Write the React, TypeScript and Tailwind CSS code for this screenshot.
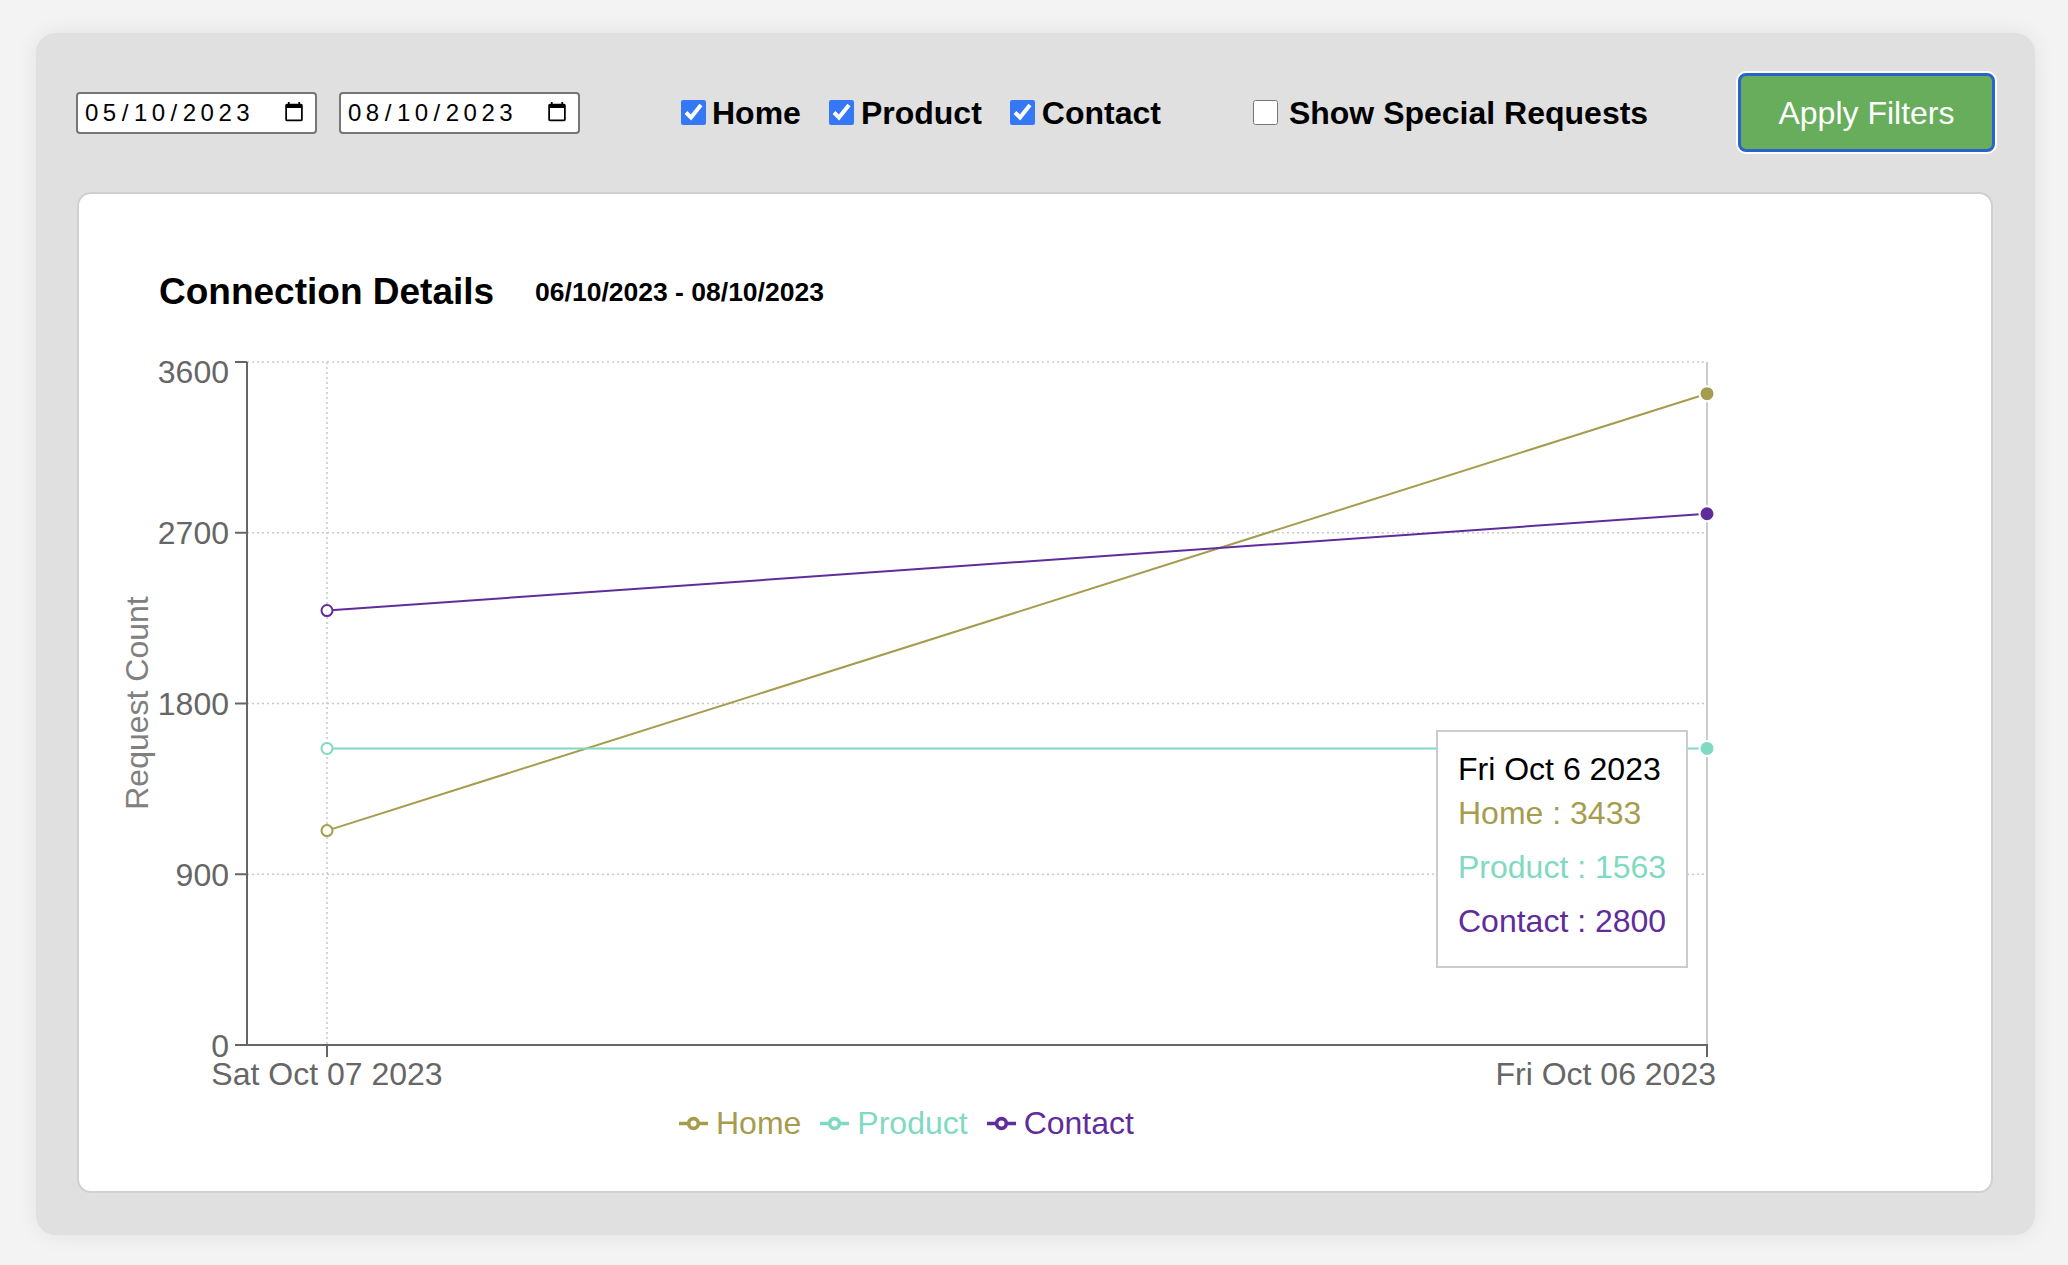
import React from 'react';

const series = [
  { name: 'Home', color: '#a69c4e', first: 1130, last: 3433 },
  { name: 'Product', color: '#80d9c1', first: 1563, last: 1563 },
  { name: 'Contact', color: '#5f2d9b', first: 2290, last: 2800 },
];

// chart coordinates are written in page pixels, shifted back by the svg origin
const X0 = 327;
const X1 = 1707;
const yOf = (v: number) => 1045 - (v / 3600) * 683;

function FilterCheck({ label, checked, gap }: { label: string; checked: boolean; gap: string }) {
  return (
    <label className="flex items-center">
      <input
        type="checkbox"
        defaultChecked={checked}
        className="m-0 w-[25px] h-[25px] accent-[#3478f6]"
      />
      <span className={`${gap} text-[32px] font-bold text-black`}>{label}</span>
    </label>
  );
}

function DateBox({ value, className }: { value: string; className?: string }) {
  return (
    <input
      type="date"
      defaultValue={value}
      className={`${className ?? ''} w-[241px] h-[42px] border-2 border-[#767676] rounded-[4px] bg-white pl-[6px] pr-[8px] text-[24px] tracking-[4.5px] text-black [&::-webkit-calendar-picker-indicator]:w-[22px] [&::-webkit-calendar-picker-indicator]:h-[24px] [&::-webkit-calendar-picker-indicator]:m-0`}
    />
  );
}

function LegendIcon({ color }: { color: string }) {
  return (
    <svg width={29} height={29} viewBox="0 0 32 32">
      <path
        d="M0,16h10.667A5.333,5.333,0,1,1,21.333,16H32M21.333,16A5.333,5.333,0,1,1,10.667,16"
        fill="none"
        stroke={color}
        strokeWidth={4}
      />
    </svg>
  );
}

function Chart() {
  const ticks = [3600, 2700, 1800, 900, 0];
  return (
    <svg width={1912} height={784} className="block">
      <g transform="translate(-79,-311)" fontFamily="'Liberation Sans', Arial, sans-serif">
        {/* grid */}
        {[3600, 2700, 1800, 900].map((v) => (
          <line key={v} x1={247} x2={X1} y1={yOf(v)} y2={yOf(v)} stroke="#c8c8c8" strokeWidth={1.5} strokeDasharray="2 3" />
        ))}
        <line x1={X0} x2={X0} y1={362} y2={1045} stroke="#c8c8c8" strokeWidth={1.5} strokeDasharray="2 3" />

        {/* tooltip cursor */}
        <line x1={X1} x2={X1} y1={362} y2={1045} stroke="#cccccc" strokeWidth={2} />

        {/* y axis */}
        <line x1={247} x2={247} y1={362} y2={1046} stroke="#666" strokeWidth={2} />
        {ticks.map((v) => (
          <g key={v}>
            <line x1={235} x2={247} y1={yOf(v)} y2={yOf(v)} stroke="#666" strokeWidth={2} />
            <text x={229} y={v === 3600 ? 383 : yOf(v) + 11.5} textAnchor="end" fontSize={32} fill="#666">
              {v}
            </text>
          </g>
        ))}
        <text
          x={137}
          y={703}
          transform="rotate(-90 137 703)"
          textAnchor="middle"
          dominantBaseline="central"
          fontSize={32}
          fill="#808080"
        >
          Request Count
        </text>

        {/* x axis */}
        <line x1={246} x2={X1 + 1} y1={1045} y2={1045} stroke="#666" strokeWidth={2} />
        <line x1={X0} x2={X0} y1={1045} y2={1057} stroke="#666" strokeWidth={2} />
        <line x1={X1} x2={X1} y1={1045} y2={1057} stroke="#666" strokeWidth={2} />
        <text x={X0} y={1085} textAnchor="middle" fontSize={32} fill="#666">
          Sat Oct 07 2023
        </text>
        <text x={1716} y={1085} textAnchor="end" fontSize={32} fill="#666">
          Fri Oct 06 2023
        </text>

        {/* lines */}
        {series.map((s) => (
          <line key={s.name} x1={X0} y1={yOf(s.first)} x2={X1} y2={yOf(s.last)} stroke={s.color} strokeWidth={2} />
        ))}
        {series.map((s) => (
          <g key={s.name + '-dots'}>
            <circle cx={X0} cy={yOf(s.first)} r={5.5} fill="#fff" stroke={s.color} strokeWidth={2} />
            <circle cx={X1} cy={yOf(s.last)} r={7.5} fill={s.color} stroke="#fff" strokeWidth={2} />
          </g>
        ))}
      </g>
    </svg>
  );
}

export default function App() {
  return (
    <div className="min-h-[1265px] bg-[#f3f3f3] pt-[33px] pl-[36px] font-['Liberation_Sans',Arial,sans-serif]">
      <div className="w-[1999px] h-[1202px] rounded-[20px] bg-[#e1e0e1] shadow-[0_0_22px_rgba(0,0,0,0.07)] pt-[40px] px-[40px]">
        {/* filters */}
        <div className="flex items-center h-[79px]">
          <DateBox value="2023-05-10" />
          <DateBox value="2023-08-10" className="ml-[22px]" />
          <div className="ml-[101px] flex items-center">
            <FilterCheck label="Home" checked gap="ml-[6px]" />
          </div>
          <div className="ml-[28px] flex items-center">
            <FilterCheck label="Product" checked gap="ml-[7px]" />
          </div>
          <div className="ml-[28px] flex items-center">
            <FilterCheck label="Contact" checked gap="ml-[7px]" />
          </div>
          <div className="ml-[92px] flex items-center">
            <FilterCheck label="Show Special Requests" checked={false} gap="ml-[11px]" />
          </div>
          <button className="ml-auto w-[257px] h-[79px] rounded-[8px] border-[3px] border-[#2c62cc] bg-[#67ad5b] ring-2 ring-white text-[32px] text-white">
            Apply Filters
          </button>
        </div>

        {/* chart card */}
        <div className="mt-[40px] ml-[1px] w-[1916px] h-[1001px] rounded-[14px] border-2 border-[#d0d0d0] bg-white">
          <div className="flex items-baseline h-[42px] mt-[75px] pl-[80px]">
            <h2 className="text-[37px] leading-[46px] font-bold text-black">Connection Details</h2>
            <span className="ml-[41px] -translate-y-[3px] text-[26.5px] font-bold text-black">06/10/2023 - 08/10/2023</span>
          </div>

          <div className="relative">
            <Chart />
            <div className="absolute left-[1357px] top-[419px] border-2 border-[#cccccc] bg-white px-[20px] pt-[19px] pb-[27px] text-[32px] leading-[36px] whitespace-nowrap">
              <div className="text-black">Fri Oct 6 2023</div>
              <div className="mt-[8px] text-[#a69c4e]">Home : 3433</div>
              <div className="mt-[18px] text-[#80d9c1]">Product : 1563</div>
              <div className="mt-[18px] text-[#5f2d9b]">Contact : 2800</div>
            </div>
          </div>

          {/* legend */}
          <div className="mt-[10px] pl-[600px] flex items-center h-[36px] text-[32px] leading-[36px]">
            {series.map((s, i) => (
              <div key={s.name} className={`flex items-center ${i > 0 ? 'ml-[19px]' : ''}`}>
                <LegendIcon color={s.color} />
                <span className="ml-[8px]" style={{ color: s.color }}>
                  {s.name}
                </span>
              </div>
            ))}
          </div>
        </div>
      </div>
    </div>
  );
}
